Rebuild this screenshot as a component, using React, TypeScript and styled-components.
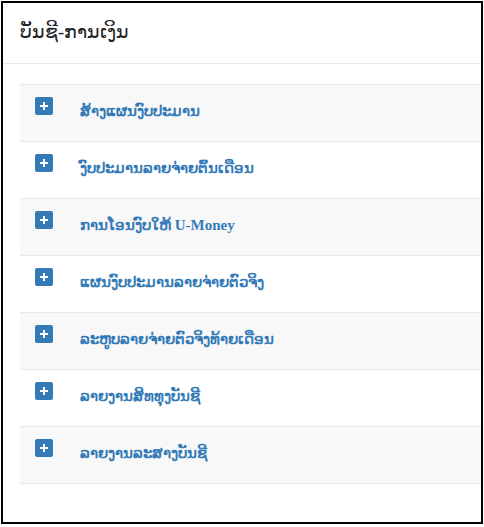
import React from "react";
import styled, { createGlobalStyle } from "styled-components";

const Global = createGlobalStyle`
  html, body { margin: 0; padding: 0; background: #fff; }
  body { padding: 1px; font-family: "Liberation Serif", serif; }
`;

const Frame = styled.div`
  box-sizing: border-box;
  width: 482px;
  height: 523px;
  border: 2px solid #000;
  overflow: hidden;
  background: #fff;
`;

const Header = styled.div`
  box-sizing: border-box;
  height: 61px;
  border-bottom: 1px solid #eaeaea;
  display: flex;
  align-items: center;
  padding-left: 17px;
`;

const Title = styled.h3`
  margin: 0 0 2px 0;
  font-size: 18.5px;
  font-weight: normal;
  color: #222;
  font-family: "Liberation Serif", serif;
`;

const Body = styled.div`
  padding: 20px 0 0 17px;
`;

const Table = styled.div`
  display: flex;
  flex-direction: column;
  border-bottom: 1px solid #e8e8e8;
`;

const Row = styled.div<{ $striped: boolean }>`
  box-sizing: border-box;
  height: 57px;
  border-top: 1px solid #e8e8e8;
  background: ${(p) => (p.$striped ? "#f8f8f8" : "#fff")};
  display: flex;
  align-items: flex-start;
  padding: 12px 0 0 15px;
`;

const PlusIcon = styled.span`
  box-sizing: border-box;
  width: 18px;
  height: 18px;
  border-radius: 2px;
  background: #337ab7;
  display: flex;
  align-items: center;
  justify-content: center;
  flex: none;
`;

const Label = styled.a`
  margin-left: 27px;
  margin-top: 5px;
  color: #337ab7;
  font-weight: bold;
  font-size: 15px;
  text-decoration: none;
  font-family: "Liberation Serif", serif;
`;

const items = [
  "ສ້າງແຜນງົບປະມານ",
  "ງົບປະມານລາຍຈ່າຍຕົ້ນເດືອນ",
  "ການໂອນງົບໃຫ້ U-Money",
  "ແຜນງົບປະມານລາຍຈ່າຍຕົວຈິງ",
  "ລະຫູບລາຍຈ່າຍຕົວຈິງທ້າຍເດືອນ",
  "ລາຍງານສິທທຸງບັນຊີ",
  "ລາຍງານລະສາງບັນຊີ",
];

export default function App() {
  return (
    <>
      <Global />
      <Frame>
        <Header>
          <Title>ບັນຊີ-ການເງິນ</Title>
        </Header>
        <Body>
          <Table>
            {items.map((t, i) => (
              <Row key={i} $striped={i % 2 === 0}>
                <PlusIcon>
                  <svg width="10" height="10" viewBox="0 0 10 10">
                    <path d="M5 1v8M1 5h8" stroke="#fff" strokeWidth="2" />
                  </svg>
                </PlusIcon>
                <Label href="#">{t}</Label>
              </Row>
            ))}
          </Table>
        </Body>
      </Frame>
    </>
  );
}
